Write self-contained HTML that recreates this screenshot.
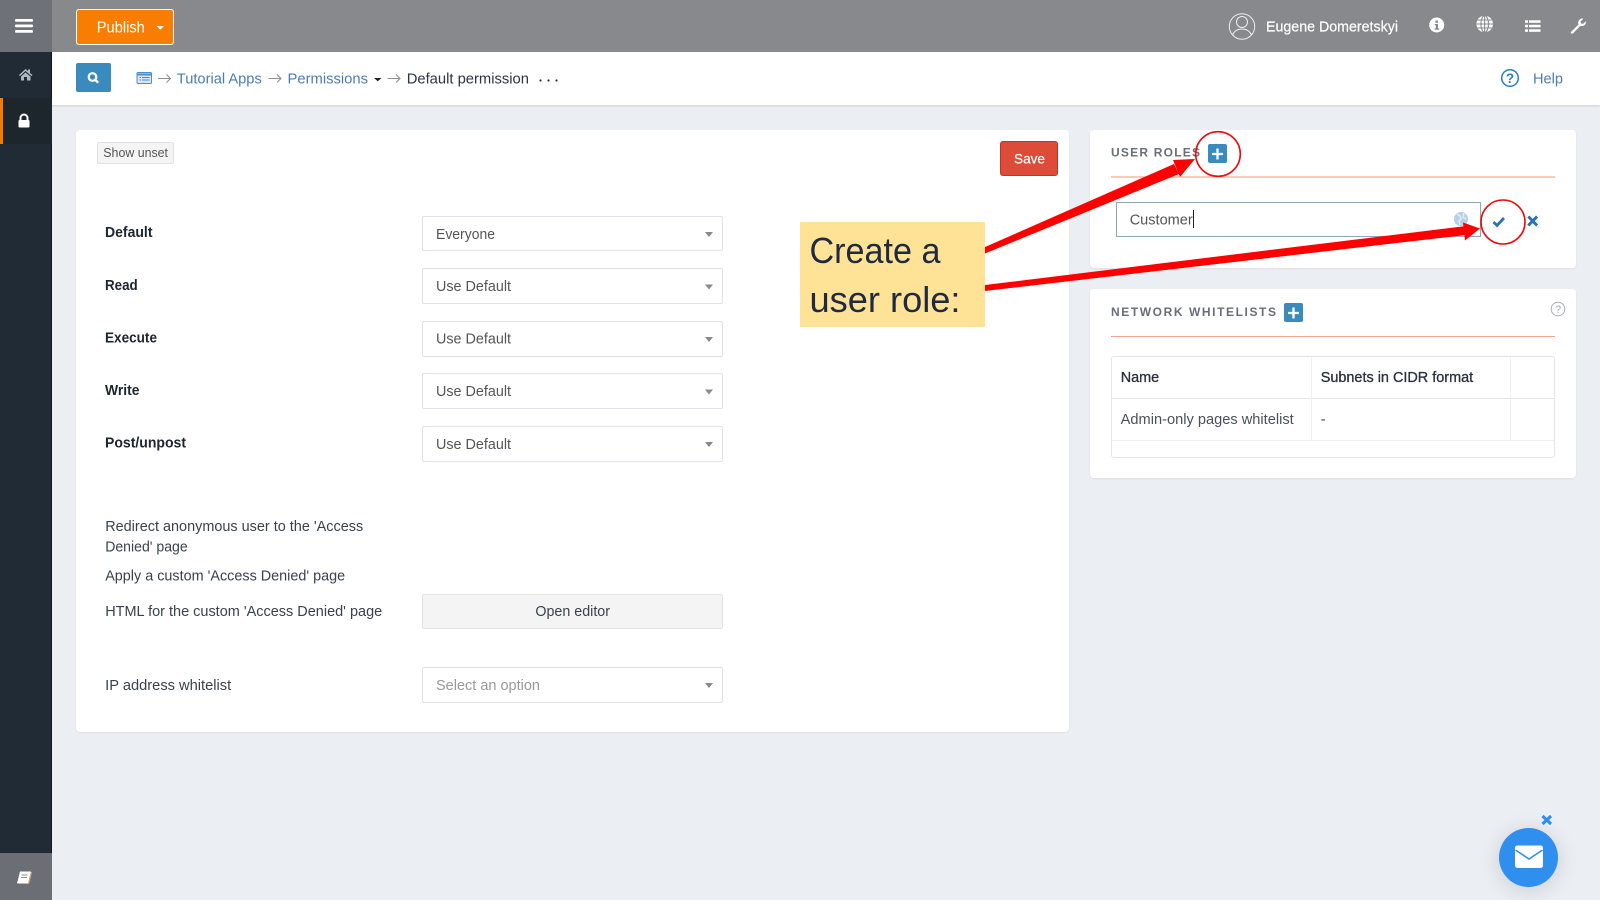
<!DOCTYPE html>
<html lang="en">
<head>
<meta charset="utf-8">
<title>Default permission</title>
<style>
html,body{margin:0;padding:0;width:1600px;height:900px;overflow:hidden;background:#ebeef3;font-family:"Liberation Sans",sans-serif}
.b{position:absolute;box-sizing:border-box}
.card{background:#fff;border-radius:4px;box-shadow:0 1px 2px rgba(0,0,0,.06)}
.sel{left:422px;width:301px;height:36px;background:#fff;border:1.5px solid #dfe2e8;border-radius:2px}
svg.o{position:absolute;left:0;top:0}
text{font-family:"Liberation Sans",sans-serif}
</style>
</head>
<body>
<div class="b" style="left:0;top:0;width:52px;height:900px;background:#212b35;border-right:1px solid #12181e"></div>
<div class="b" style="left:0;top:0;width:52px;height:52px;background:#6e7177"></div>
<div class="b" style="left:0;top:98px;width:52px;height:46px;background:#1d262d;border-left:3px solid #f67c01"></div>
<div class="b" style="left:0;top:853px;width:52px;height:47px;background:#6b6e74"></div>
<div class="b" style="left:52px;top:0;width:1548px;height:52px;background:#88898d"></div>
<div class="b" style="left:52px;top:52px;width:1548px;height:53px;background:#fff;box-shadow:0 1px 2px rgba(0,0,0,.12)"></div>
<div class="b" style="left:76px;top:9px;width:98px;height:36px;background:#f97d00;border:1px solid #fff;border-radius:3px"></div>
<div class="b" style="left:76px;top:63px;width:35px;height:29px;background:#3a8bbd;border-radius:2px"></div>

<div class="b card" style="left:76px;top:130px;width:993px;height:602px"></div>
<div class="b card" style="left:1090px;top:130px;width:486px;height:138px"></div>
<div class="b card" style="left:1090px;top:289px;width:486px;height:189px"></div>

<div class="b" style="left:97px;top:142px;width:77px;height:22px;background:#f4f4f4;border:1px solid #e2e2e2;border-radius:2px"></div>
<div class="b" style="left:1000px;top:141px;width:58px;height:35px;background:#dd4b39;border:1px solid #c23321;border-radius:3px"></div>

<div class="b sel" style="top:216px;height:35px"></div>
<div class="b sel" style="top:268px"></div>
<div class="b sel" style="top:321px"></div>
<div class="b sel" style="top:373px"></div>
<div class="b sel" style="top:426px"></div>
<div class="b" style="left:422px;top:594px;width:301px;height:35px;background:#f4f4f4;border:1px solid #e3e3e3;border-radius:2px"></div>
<div class="b sel" style="top:667px"></div>

<div class="b" style="left:1111px;top:176px;width:444px;height:2px;background:#fcc9ba"></div>
<div class="b" style="left:1111px;top:336px;width:444px;height:1px;background:#f4a48e"></div>
<div class="b" style="left:1208px;top:144px;width:19px;height:19px;background:#3a8bbd;border-radius:2px"></div>
<div class="b" style="left:1284px;top:303px;width:19px;height:19px;background:#3a8bbd;border-radius:2px"></div>
<div class="b" style="left:1116px;top:202px;width:365px;height:35px;background:#fff;border:1px solid #8fa5b8"></div>

<div class="b" style="left:1111px;top:356px;width:444px;height:102px;border:1px solid #e3e5e9;border-radius:3px"></div>
<div class="b" style="left:1112px;top:398px;width:442px;height:1px;background:#e3e5e9"></div>
<div class="b" style="left:1112px;top:440px;width:442px;height:1px;background:#eff0f3"></div>
<div class="b" style="left:1311px;top:357px;width:1px;height:83px;background:#eff0f3"></div>
<div class="b" style="left:1510px;top:357px;width:1px;height:83px;background:#eff0f3"></div>

<div class="b" style="left:800px;top:222px;width:185px;height:105px;background:#fee295"></div>

<div class="b" style="left:1499px;top:827.5px;width:59px;height:59px;border-radius:50%;background:#2f8fee;box-shadow:0 3px 22px rgba(0,0,0,.14)"></div>

<svg class="o" width="1600" height="900" viewBox="0 0 1600 900" xmlns="http://www.w3.org/2000/svg">
  <!-- sidebar icons -->
  <g fill="#fff"><rect x="15" y="19" width="18" height="2.700" rx="1"/><rect x="15" y="24.500" width="18" height="2.700" rx="1"/><rect x="15" y="30" width="18" height="2.700" rx="1"/></g>
  <path d="M19 75L25.500 69L28 71.100V69.500H30V73L32.500 75L31.500 76.100L25.500 71L20 76.100ZM21 76.500L25.500 72.500L30.500 76.500V80.500H27V77H24V80.500H21Z" fill="#aeb7c2"/>
  <path d="M20.500 120.500V118a3.500 3.500 0 0 1 7 0v2.500" fill="none" stroke="#fff" stroke-width="2"/>
  <rect x="18.500" y="120" width="11" height="7.500" rx="1" fill="#fff"/>
  <path d="M20 871.500h11l-3 12h-10.500a2 2 0 0 1 .2-2.500z" fill="#fff"/><path d="M21.500 875h6M21 877.500h6" stroke="#8a8d93" stroke-width="1"/><path d="M31.500 872l-3 12" stroke="#e7a66a" stroke-width="1"/>

  <!-- header -->
  <text x="96.800" y="32.500" font-size="15.500" fill="#fff" textLength="48" lengthAdjust="spacingAndGlyphs">Publish</text>
  <path d="M156.500 26h7.500l-3.750 3.800z" fill="#fff"/>
  <circle cx="1242" cy="26.500" r="12.700" fill="none" stroke="#eceded" stroke-width="1"/>
  <circle cx="1242" cy="22" r="5.500" fill="none" stroke="#eceded" stroke-width="1"/>
  <path d="M1232.500 35c2-4.500 5.500-6 9.500-6s7.500 1.500 9.500 6" fill="none" stroke="#eceded" stroke-width="1"/>
  <text x="1266" y="31.500" font-size="15" fill="#fff" stroke="#fff" stroke-width=".2" textLength="132" lengthAdjust="spacingAndGlyphs">Eugene Domeretskyi</text>
  <circle cx="1436.700" cy="25" r="7.500" fill="#fff"/>
  <rect x="1435.500" y="20.500" width="2.500" height="2.300" fill="#88898d"/><path d="M1434.700 24h3.300v4.400h1.200v1.300h-4.500v-1.300h1.100v-3.100h-1.100z" fill="#88898d"/>
  <circle cx="1484.700" cy="24" r="8.300" fill="#fff"/>
  <g fill="none" stroke="#88898d" stroke-width="1.100"><ellipse cx="1484.700" cy="24" rx="3.800" ry="8.300"/><path d="M1484.700 15.700v16.600M1476.400 24h16.600M1477.500 20h14.400M1477.500 28h14.400"/></g>
  <g fill="#fff"><rect x="1525" y="20.300" width="3" height="2.500"/><rect x="1529" y="20.300" width="11.500" height="2.500"/><rect x="1525" y="24.800" width="3" height="2.500"/><rect x="1529" y="24.800" width="11.500" height="2.500"/><rect x="1525" y="29.300" width="3" height="2.500"/><rect x="1529" y="29.300" width="11.500" height="2.500"/></g>
  <path d="M1571 32l7.500-7.500c-.8-2.300 0-4.300 1.800-5.400 1-.6 2-.7 3-.4l-2.700 2.700.4 2.100 2.100.4 2.700-2.600c.3 1.100 0 2.400-.9 3.400-1.200 1.300-2.900 1.700-4.500 1.100l-7.100 7.300c-.7.600-1.600.6-2.100 0-.6-.5-.7-1-.2-1.700z" fill="#fff"/>

  <!-- breadcrumb -->
  <circle cx="92.500" cy="77" r="3.800" fill="none" stroke="#fff" stroke-width="2.200"/><path d="M95.200 79.700l3 3" stroke="#fff" stroke-width="2.400"/>
  <rect x="137" y="72.500" width="14.500" height="11" rx="1" fill="#d8e6f3" stroke="#4e8dc4" stroke-width="1"/><path d="M137 74.500h14.500" stroke="#4e8dc4" stroke-width="2"/><path d="M139.500 77.500h1.500M142 77.500h7.500M139.500 80h1.500M142 80h7.500" stroke="#4e8dc4" stroke-width="1"/>
  <g fill="none" stroke="#8e9094" stroke-width="1.100"><path d="M158 78.500h12M166.500 74.500l4 4-4 4"/><path d="M268.500 78.500h12M277 74.500l4 4-4 4"/><path d="M387.500 78.500h12M396 74.500l4 4-4 4"/></g>
  <text x="176.800" y="83.500" font-size="15" fill="#4b7db4" textLength="85" lengthAdjust="spacingAndGlyphs">Tutorial Apps</text>
  <text x="287.500" y="83.500" font-size="15" fill="#4b7db4" textLength="80.500" lengthAdjust="spacingAndGlyphs">Permissions</text>
  <path d="M374 78h7.500l-3.750 3.200z" fill="#1a1f29"/>
  <text x="406.700" y="83.500" font-size="15" fill="#2c3344" textLength="122.300" lengthAdjust="spacingAndGlyphs">Default permission</text>
  <g fill="#2c3344"><circle cx="540.500" cy="80.500" r="1.100"/><circle cx="548.500" cy="80.500" r="1.100"/><circle cx="556.500" cy="80.500" r="1.100"/></g>
  <circle cx="1510" cy="78" r="8.300" fill="none" stroke="#2a80b9" stroke-width="1.500"/>
  <text x="1510" y="83" font-size="13.500" font-weight="bold" fill="#2a80b9" text-anchor="middle">?</text>
  <text x="1533" y="83.500" font-size="15" fill="#4b7db4" textLength="30" lengthAdjust="spacingAndGlyphs">Help</text>

  <!-- form -->
  <text x="103.300" y="157" font-size="12.500" fill="#555" textLength="64.700" lengthAdjust="spacingAndGlyphs">Show unset</text>
  <text x="1014" y="163.500" font-size="14" fill="#fff" stroke="#fff" stroke-width=".2" textLength="31" lengthAdjust="spacingAndGlyphs">Save</text>
  <g font-size="14.500" font-weight="bold" fill="#1d2530">
    <text x="105" y="237" textLength="47.500" lengthAdjust="spacingAndGlyphs">Default</text>
    <text x="105" y="290" textLength="32.700" lengthAdjust="spacingAndGlyphs">Read</text>
    <text x="105" y="342.500" textLength="52" lengthAdjust="spacingAndGlyphs">Execute</text>
    <text x="105" y="395" textLength="34.500" lengthAdjust="spacingAndGlyphs">Write</text>
    <text x="105" y="447.500" textLength="81" lengthAdjust="spacingAndGlyphs">Post/unpost</text>
  </g>
  <g font-size="14.500" fill="#555">
    <text x="436" y="239" textLength="59" lengthAdjust="spacingAndGlyphs">Everyone</text>
    <text x="436" y="291" textLength="75" lengthAdjust="spacingAndGlyphs">Use Default</text>
    <text x="436" y="343.500" textLength="75" lengthAdjust="spacingAndGlyphs">Use Default</text>
    <text x="436" y="396" textLength="75" lengthAdjust="spacingAndGlyphs">Use Default</text>
    <text x="436" y="449" textLength="75" lengthAdjust="spacingAndGlyphs">Use Default</text>
  </g>
  <text x="436" y="690" font-size="14.500" fill="#999" textLength="104" lengthAdjust="spacingAndGlyphs">Select an option</text>
  <g fill="#8a8a8a">
    <path d="M705 232h8l-4 5z"/><path d="M705 284.500h8l-4 5z"/><path d="M705 337h8l-4 5z"/><path d="M705 389.500h8l-4 5z"/><path d="M705 442h8l-4 5z"/><path d="M705 683h8l-4 5z"/>
  </g>
  <g font-size="14.500" fill="#3a414e">
    <text x="105.200" y="531" textLength="258" lengthAdjust="spacingAndGlyphs">Redirect anonymous user to the 'Access</text>
    <text x="105.200" y="551.500" textLength="82.500" lengthAdjust="spacingAndGlyphs">Denied' page</text>
    <text x="105.200" y="580.500" textLength="240" lengthAdjust="spacingAndGlyphs">Apply a custom 'Access Denied' page</text>
    <text x="105.200" y="616" textLength="277" lengthAdjust="spacingAndGlyphs">HTML for the custom 'Access Denied' page</text>
    <text x="105.200" y="690" textLength="126" lengthAdjust="spacingAndGlyphs">IP address whitelist</text>
    <text x="535.400" y="616" textLength="74.600" lengthAdjust="spacingAndGlyphs">Open editor</text>
  </g>

  <!-- right column -->
  <g font-size="12" font-weight="bold" fill="#6b6e76">
    <text x="1111" y="156.500" textLength="89" lengthAdjust="spacing">USER ROLES</text>
    <text x="1111" y="316" textLength="165" lengthAdjust="spacing">NETWORK WHITELISTS</text>
  </g>
  <path d="M1217.500 148.500v11M1212 154h11M1293.500 307.500v11M1288 313h11" stroke="#fff" stroke-width="2.300"/>
  <text x="1129.700" y="224.500" font-size="14.500" fill="#555" textLength="63" lengthAdjust="spacingAndGlyphs">Customer</text>
  <path d="M1193.500 210v18" stroke="#222" stroke-width="1"/>
  <circle cx="1461" cy="219" r="7" fill="#b6d0e6"/><path d="M1457 214l3 2 1 3-2 2 1 4M1464 213l-1 4 3 2" stroke="#e7eef5" stroke-width="1.400" fill="none"/>
  <path d="M1493.500 222l3.500 3.500 7-7.500" fill="none" stroke="#2a72b0" stroke-width="2.800"/>
  <path d="M1528.300 216.500l8.800 9M1537.100 216.500l-8.800 9" stroke="#2a72b0" stroke-width="3"/>
  <circle cx="1558" cy="309" r="6.800" fill="none" stroke="#a9acb1" stroke-width="1"/>
  <text x="1558" y="313" font-size="11" fill="#a9acb1" text-anchor="middle">?</text>
  <g font-size="14.500" fill="#2b303c" stroke="#2b303c" stroke-width=".3">
    <text x="1120.700" y="382" textLength="38.500" lengthAdjust="spacingAndGlyphs">Name</text>
    <text x="1320.700" y="382" textLength="152.500" lengthAdjust="spacingAndGlyphs">Subnets in CIDR format</text>
  </g>
  <text x="1120.700" y="424" font-size="14.500" fill="#4a505c" textLength="173" lengthAdjust="spacingAndGlyphs">Admin-only pages whitelist</text>
  <text x="1320.700" y="424" font-size="14.500" fill="#4a505c">-</text>

  <!-- annotation -->
  <text x="809.500" y="263" font-size="36" fill="#1f2a40" textLength="131" lengthAdjust="spacingAndGlyphs">Create a</text>
  <text x="809.500" y="312" font-size="36" fill="#1f2a40" textLength="151" lengthAdjust="spacingAndGlyphs">user role:</text>
  <g fill="#fe0000">
    <path d="M985 247L1174 164L1179 174L985 253.500Z"/>
    <path d="M1195 159L1173 160L1180 177Z"/>
    <path d="M985 285L1466 226L1466 235L985 291Z"/>
    <path d="M1480 228.500L1463 222.500L1465 240.500Z"/>
  </g>
  <g fill="none" stroke="#ea0b0b" stroke-width="1.600">
    <circle cx="1218" cy="154" r="22.300"/>
    <circle cx="1503" cy="222" r="22"/>
  </g>

  <!-- chat widget -->
  <path d="M1542.500 816l8.500 8M1551 816l-8.500 8" stroke="#2f8fee" stroke-width="3.200"/>
  <rect x="1515" y="845.500" width="28" height="22.500" rx="2.500" fill="#fff"/>
  <path d="M1515.500 850l13.500 9 13.500-9" fill="none" stroke="#2f8fee" stroke-width="1.600"/>
</svg>
</body>
</html>
